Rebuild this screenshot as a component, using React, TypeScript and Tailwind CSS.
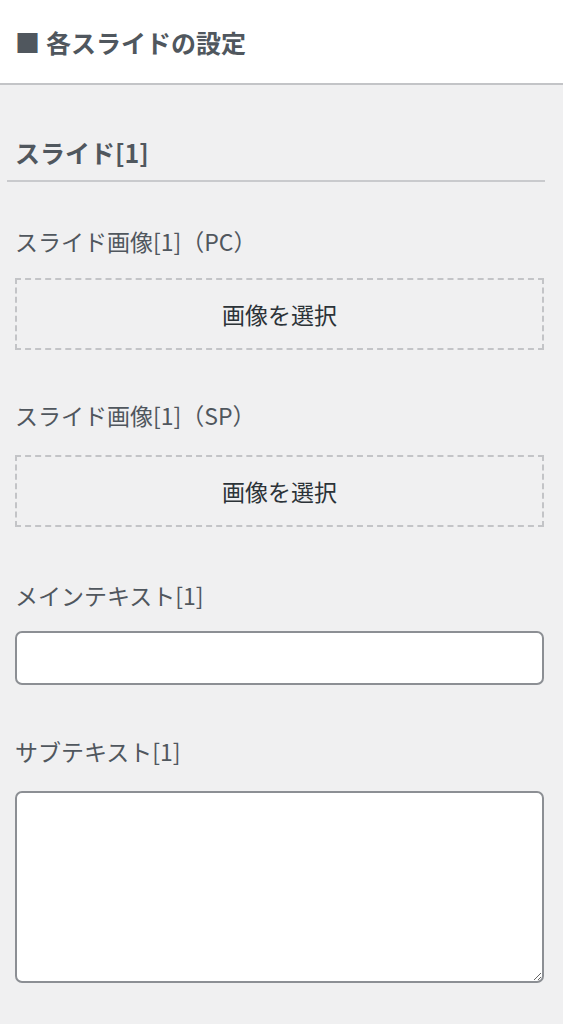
export default function App() {
  const font = "font-['Noto_Sans_CJK_JP','Noto_Sans',sans-serif]"

  return (
    <div className={`min-h-screen bg-[#f0f0f1] ${font}`}>
      {/* Panel header */}
      <div className="flex h-[85px] items-center border-b-2 border-[#c3c4c7] bg-white px-[15px]">
        <h2 className="text-[25px] leading-[32px] font-bold text-[#50575e]">
          <span className="mr-[6px]">■</span>各スライドの設定
        </h2>
      </div>

      <div className="pr-[19px] pl-[15px] pb-10">
        {/* Slide heading */}
        <div className="-mr-[1px] -ml-[8px] mt-[51px] border-b-2 border-[#c9cacd] pl-[8px] pb-[12px]">
          <h3 className="text-[25px] leading-[32px] font-bold text-[#50575e]">スライド[1]</h3>
        </div>

        <label className="mt-[43px] block text-[23px] leading-[32px] text-[#50575e]">スライド画像[1]（PC）</label>
        <button className="mt-[21px] flex h-[72px] w-full items-center justify-center border-2 border-dashed border-[#c3c4c7] text-[23px] text-[#2c3338]">
          画像を選択
        </button>

        <label className="mt-[49px] block text-[23px] leading-[32px] text-[#50575e]">スライド画像[1]（SP）</label>
        <button className="mt-[24px] flex h-[72px] w-full items-center justify-center border-2 border-dashed border-[#c3c4c7] text-[23px] text-[#2c3338]">
          画像を選択
        </button>

        <label className="mt-[52px] block text-[23px] leading-[32px] text-[#50575e]">メインテキスト[1]</label>
        <input
          type="text"
          className="mt-[20px] block h-[54px] w-full rounded-[7px] border-2 border-[#8c8f94] bg-white px-3 text-[23px] outline-none"
        />

        <label className="mt-[50px] block text-[23px] leading-[32px] text-[#50575e]">サブテキスト[1]</label>
        <textarea className="mt-[24px] block h-[192px] w-full rounded-[7px] border-2 border-[#8c8f94] bg-white px-3 text-[23px] outline-none" />
      </div>
    </div>
  )
}
